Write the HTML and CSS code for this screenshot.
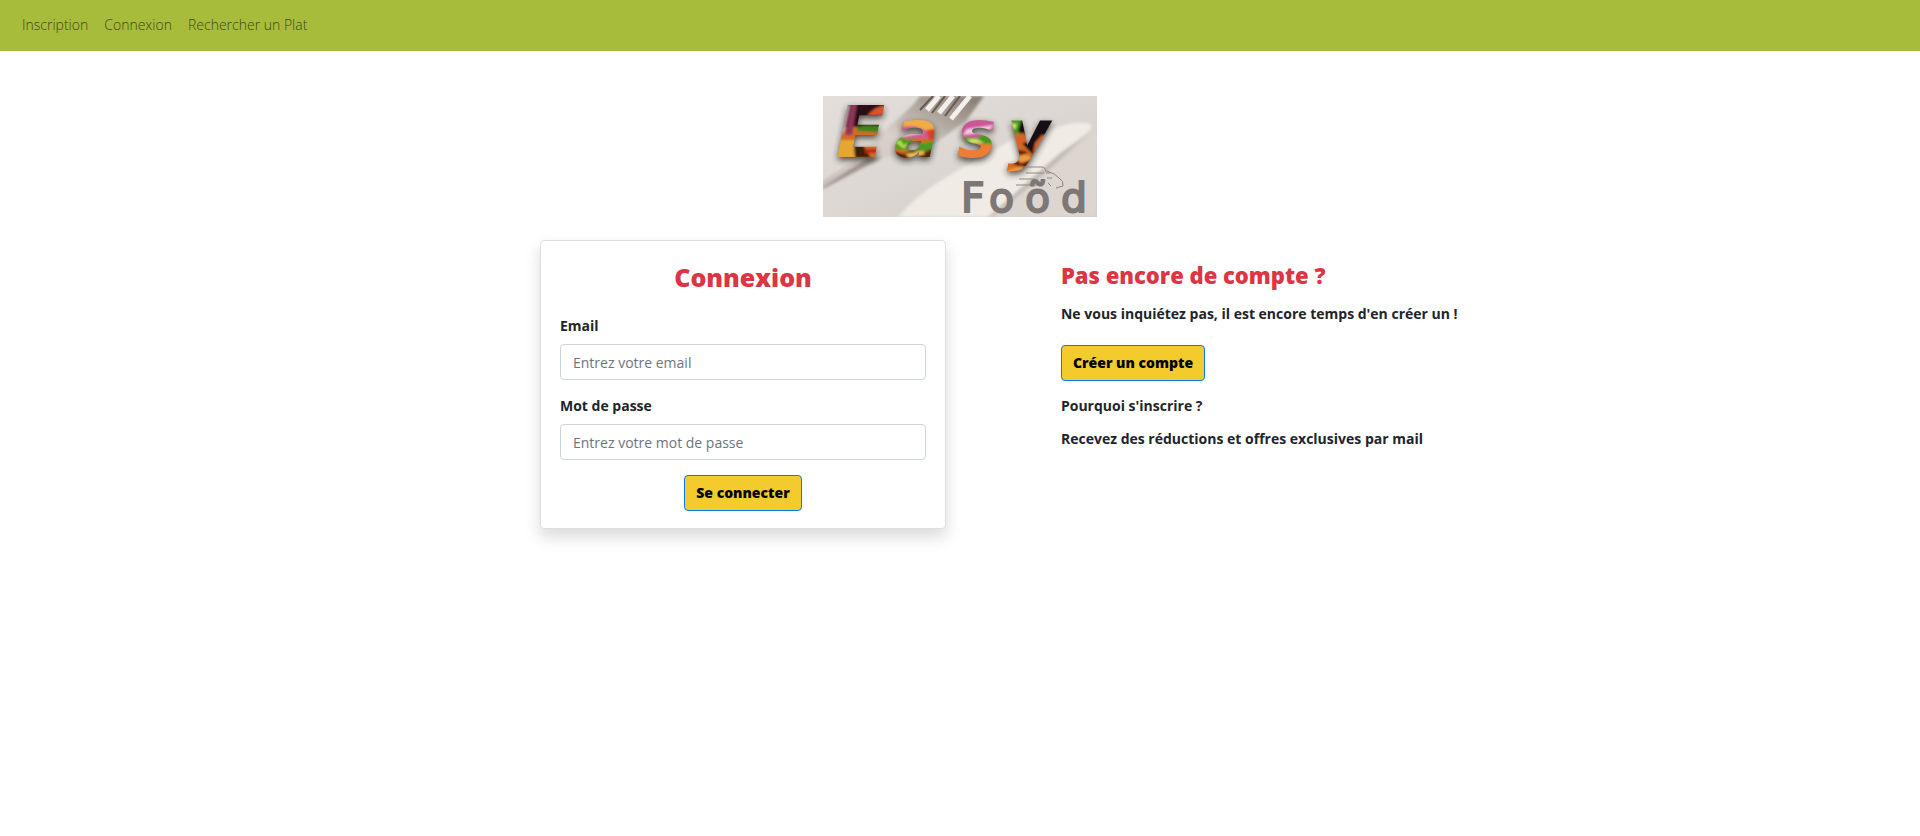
FILE: index.html
```html
<!DOCTYPE html>
<html lang="fr">
<head>
<meta charset="utf-8">
<meta name="viewport" content="width=device-width, initial-scale=1">
<title>Connexion - Easy Food</title>
<link rel="stylesheet" href="styles.css">
</head>
<body>
<nav class="navbar">
  <a class="nav-link" href="#inscription">Inscription</a>
  <a class="nav-link" href="#connexion">Connexion</a>
  <a class="nav-link" href="#plats">Rechercher un Plat</a>
</nav>
<header class="brand">
  <svg class="logo" viewBox="0 0 274 121" role="img" aria-label="Easy Food">
    <defs>
      <linearGradient id="table" x1="0" y1="0" x2="1" y2="1"><stop offset="0" stop-color="#e3deda"/><stop offset=".5" stop-color="#dcd7d2"/><stop offset="1" stop-color="#d0c9c4"/></linearGradient>
      <linearGradient id="steel" x1="0" y1="1" x2="1" y2="0"><stop offset="0" stop-color="#c9c2bb"/><stop offset=".5" stop-color="#d8d1c9"/><stop offset="1" stop-color="#857970"/></linearGradient>
      <filter id="soft" x="-10%" y="-10%" width="120%" height="120%"><feGaussianBlur stdDeviation="1.5"/></filter>
      <filter id="shade" x="-10%" y="-20%" width="120%" height="150%"><feGaussianBlur stdDeviation="3"/></filter>
      <filter id="melt"><feGaussianBlur stdDeviation=".8"/></filter>
      <clipPath id="word"><text class="easy" y="61"><tspan class="easy-cap" x="13">E</tspan><tspan x="71">a</tspan><tspan x="134">s</tspan><tspan x="184">y</tspan></text></clipPath>
      <clipPath id="frame"><path d="M0 0h274v121H0z"/></clipPath>
    </defs>
    <g clip-path="url(#frame)">
      <path fill="url(#table)" d="M0 0h274v121H0z"/>
      <g filter="url(#soft)">
        <path fill="#9f948c" d="M0 85 48 55 66 58 0 93z"/>
        <path fill="url(#steel)" d="M58 38 91 8 97 0h64l-18 25-17 12-30 22-52 3-44 29-4-3 44-30z"/>
        <path fill="#f0ebe5" d="M75 121C105 85 160 62 190 43L250 27Q276 25 266 35L165 121z"/>
        <path fill="#c3bbb3" d="m266 37-85 78-16 6 72-64z"/>
        <path fill="#ddd6d0" d="M170 121 274 35v86z"/>
      </g>
      <path stroke="#645a52" stroke-width="2" d="m97 14 13-14M109 17 122 0M122 20 137 0"/>
      <path stroke="#f3f0ec" stroke-width="5" d="m104 14 12-14M116 17 130 0M128 23 147 0"/>
      <text class="easy easy-shadow" y="64" filter="url(#shade)"><tspan class="easy-cap" x="13">E</tspan><tspan x="71">a</tspan><tspan x="134">s</tspan><tspan x="184">y</tspan></text>
      <g clip-path="url(#word)">
        <g filter="url(#melt)">
          <path fill="#d66b21" d="M0 0h274v90H0z"/>
          <path fill="#2c1013" d="M16 7h52v24H16z"/><path fill="#8e3558" d="m28 8 6 0-5 31h-7z"/><path fill="#c5a5b0" d="m24 9 3 0-6 28h-3z"/>
          <path fill="#d7552a" d="M44 20q10-13 24-10v9z"/><path fill="#3f831f" d="M34 31q14-4 30 1l-3 5-27-2z"/>
          <path fill="#e6a633" d="M14 44h23l5 18H12z"/><path fill="#39200e" d="m31 49 9 0 8 13H32z"/><path fill="#b92715" d="M42 53h17v4H42z"/>
          <path fill="#f0ad45" d="M80 22h46v12H80z"/><path fill="#cf5a94" d="M72 33q18-7 33 3l20-3v8l-53 2z"/><path fill="#f0c0d8" d="m78 38 18-4 5 3-22 4z"/>
          <path fill="#df3b2c" d="m104 34 24-4-4 12-18 2z"/><path fill="#4e9a22" d="m69 43 9-3 5 4 8-2-3 7 34-6 5 6-8 7-45-2z"/><path fill="#b6dc4d" d="m72 46 6-2 2 5 5-2-4 6z"/>
          <path fill="#562009" d="m71 55 9 3 10-4 7 4 14-6 14 8v7H71z"/><path fill="#f0bd55" d="m82 58 18-3 2 3-15 4z"/>
          <path fill="#c95697" d="M137 24h46v18h-46z"/><path fill="#f4c7e2" d="m144 33 27-4-7 7-24 3z"/><path fill="#49971e" d="m138 41 15 1 9-4 14 10-11 4-28-5z"/>
          <path fill="#cde06b" d="m144 43 10 0 7 4-13 0z"/><path fill="#ed7b34" d="M134 51q15-6 43-2v14h-43z"/>
          <path fill="#171013" d="M190 22h50v30l-31 6-18-19z"/><path fill="#49971e" d="M182 22h17l-4 13 4 4-15 2z"/><path fill="#cde06b" d="m186 27 8 1-2 6z"/><path fill="#d9622b" d="m190 39 11-2 5 8-10 4zM212 47l7-8 10 2-7 13-12 3z"/>
          <path fill="#6b210b" d="m190 53 13 2 3 7 12-6-13 18-15-6z"/><path fill="#f09a3e" d="m191 61 12-3 7 5-12 4zM185 74l14-4 2 4-18 5z"/>
        </g>
      </g>
      <path fill="none" stroke="#8b8784" d="M199 71h21q4 2 3 5M203 77h18M196 83h16M193 89h22M224 75q9 3 12 7 5 3 4 8l-7 2M223 77l4 0M224 82l5 0M225 87l3 3"/>
    </g>
    <text class="food" y="116"><tspan x="138">F</tspan><tspan x="166">o</tspan><tspan x="202">õ</tspan><tspan x="238">d</tspan></text>
  </svg>
</header>
<main class="columns">
  <form class="card" id="connexion">
    <h1 class="card-title">Connexion</h1>
    <label class="label" for="email">Email</label>
    <input class="field" id="email" type="email" placeholder="Entrez votre email">
    <label class="label" for="password">Mot de passe</label>
    <input class="field" id="password" type="password" placeholder="Entrez votre mot de passe">
    <button class="btn btn-submit" type="button">Se connecter</button>
  </form>
  <section class="signup" id="inscription">
    <h2 class="signup-title">Pas encore de compte ?</h2>
    <p class="lead">Ne vous inquiétez pas, il est encore temps d'en créer un !</p>
    <button class="btn" type="button">Créer un compte</button>
    <p class="question">Pourquoi s'inscrire ?</p>
    <p class="offer">Recevez des réductions et offres exclusives par mail</p>
  </section>
</main>
</body>
</html>
```
FILE: styles.css
```css
* { box-sizing: border-box; }
body { margin: 0; min-height: 100vh; background: #fff; color: #212529; font: 400 14px/24px "Open Sans", "Noto Sans", sans-serif; }
h1, h2, p { margin: 0; }
.navbar { display: flex; flex-wrap: wrap; gap: 16px; padding: 13px 22px 14px; background: #a8bc3c; }
.nav-link { color: #3f4716; font-weight: 300; text-decoration: none; }
.brand { display: flex; justify-content: center; padding: 45px 16px 23px; }
.logo { display: block; width: 274px; height: 121px; overflow: visible; }
.easy { font: italic 700 66px "DejaVu Sans", sans-serif; }
.easy-cap { font-size: 72px; }
.easy-shadow { fill: #24201e; opacity: .8; }
.food { font: 400 41px "DejaVu Sans", sans-serif; fill: #7d7875; stroke: #7d7875; stroke-width: 2px; }
.columns { display: grid; grid-template-columns: 406fr 859fr; column-gap: 8.33%; padding: 0 0 40px 28.125%; align-items: start; }
.card { display: flex; flex-direction: column; padding: 20px 19px 17px; border: 1px solid #dfdfdf; border-radius: 4px; background: #fff; box-shadow: 0 8px 16px rgba(0, 0, 0, .15); }
.card-title { margin-bottom: 21px; color: #dc3545; font-size: 25px; line-height: 32px; font-weight: 800; text-align: center; }
.label { margin-bottom: 6px; font-weight: 700; }
.field { width: 100%; height: 36px; margin-bottom: 14px; padding: 0 12px; border: 1px solid #ced4da; border-radius: 4px; background: #fff; color: #495057; font: inherit; }
.field::placeholder { color: #6c757d; opacity: 1; }
.btn { height: 36px; padding: 0 11px; border: 1px solid #007bff; border-radius: 4px; background: #f3cb2c; color: #000; font: inherit; font-weight: 800; cursor: pointer; }
.btn-submit { align-self: center; margin-top: 1px; }
.signup { padding: 20px 16px 0 0; font-weight: 700; }
.signup-title { margin-bottom: 12px; color: #dc3545; font-size: 22px; line-height: 30px; font-weight: 800; }
.lead { margin-bottom: 19px; }
.question { margin: 13px 0 9px; }
```
